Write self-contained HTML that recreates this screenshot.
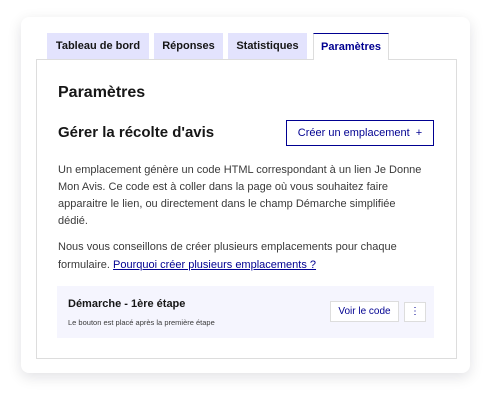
<!DOCTYPE html><html><head><style>
body{margin:0;width:494px;height:402px;background:#fff;font-family:"Liberation Sans",sans-serif;color:#161616;position:relative;overflow:hidden}
.card{position:absolute;left:21px;top:17px;width:449px;height:356px;background:#fff;border-radius:8px;box-shadow:0 4px 14px rgba(0,0,30,.12)}
.tab{position:absolute;top:33px;height:26px;background:#e3e3fd;font-size:11px;font-weight:bold;line-height:27px;text-align:center;color:#161616}
.panel{position:absolute;left:36px;top:59px;width:419px;height:298px;border:1px solid #ddd;background:#fff}
.a{position:absolute}
</style></head><body>
<div class="card"></div>
<div class="panel"></div>
<div class="tab" style="left:47px;width:102px">Tableau de bord</div>
<div class="tab" style="left:154px;width:69px">Réponses</div>
<div class="tab" style="left:228px;width:79px">Statistiques</div>
<div class="tab" style="left:313px;width:76px;top:33px;height:27px;background:#fff;color:#000091;border-top:1px solid #000091;border-left:1px solid #ddd;border-right:1px solid #ddd;box-sizing:border-box;line-height:26px">Paramètres</div>
<div class="a" style="left:58px;top:84px;font-size:16px;font-weight:bold">Paramètres</div>
<div class="a" style="left:58px;top:124px;font-size:15px;font-weight:bold">Gérer la récolte d'avis</div>
<div class="a" style="left:286px;top:120px;width:146px;height:24px;border:1px solid #000091;color:#000091;font-size:11px;line-height:24px;text-align:center">Créer un emplacement &nbsp;+</div>
<div class="a" style="left:58px;top:162px;width:368px;font-size:11px;line-height:17px;color:#3a3a3a">Un emplacement génère un code HTML correspondant à un lien Je Donne Mon Avis. Ce code est à coller dans la page où vous souhaitez faire apparaitre le lien, ou directement dans le champ Démarche simplifiée dédié.</div>
<div class="a" style="left:58px;top:238px;width:380px;font-size:11px;line-height:18px;color:#3a3a3a">Nous vous conseillons de créer plusieurs emplacements pour chaque formulaire. <span style="color:#000091;text-decoration:underline">Pourquoi créer plusieurs emplacements ?</span></div>
<div class="a" style="left:57px;top:286px;width:377px;height:52px;background:#f5f5fe"></div>
<div class="a" style="left:68px;top:298px;font-size:11px;font-weight:bold">Démarche - 1ère étape</div>
<div class="a" style="left:68px;top:318px;font-size:7.5px;color:#3a3a3a">Le bouton est placé après la première étape</div>
<div class="a" style="left:330px;top:301px;width:67px;height:19px;border:1px solid #ddd;background:#fff;color:#000091;font-size:10px;line-height:19px;text-align:center">Voir le code</div>
<div class="a" style="left:404px;top:302px;width:20px;height:18px;border:1px solid #ddd;background:#fff;color:#000091;font-size:10px;line-height:17px;text-align:center">⋮</div>
</body></html>
